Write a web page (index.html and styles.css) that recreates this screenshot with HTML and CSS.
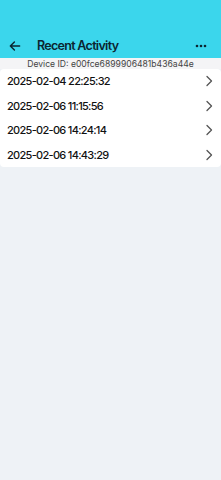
FILE: index.html
```html
<!DOCTYPE html>
<html lang="en">
  <head>
    <meta charset="UTF-8" />
    <meta name="viewport" content="width=device-width, initial-scale=1.0" />
    <title>Recent Activity</title>
    <link rel="stylesheet" href="styles.css">
  </head>
  <body>
    <header class="topbar">
      <button class="back">
        <svg width="14" height="14" viewBox="0 0 24 24" fill="none" stroke="#0b2530" stroke-width="2.4" stroke-linecap="round" stroke-linejoin="round"><path d="M20 12H4M11 5l-7 7 7 7"/></svg>
      </button>
      <h1>Recent Activity</h1>
      <button class="more">
        <svg width="12" height="4" viewBox="0 0 12 4" fill="#0b2530"><circle cx="2" cy="2" r="1.3"/><circle cx="6" cy="2" r="1.3"/><circle cx="10" cy="2" r="1.3"/></svg>
      </button>
    </header>
    <div class="device">Device ID: e00fce6899906481b436a44e</div>
    <ul class="list">
      <li><span>2025-02-04 22:25:32</span><svg class="chev" width="8" height="12" viewBox="0 0 8 12" fill="none" stroke="#555" stroke-width="1.3" stroke-linecap="round" stroke-linejoin="round"><path d="M2 1.5L6.5 6 2 10.5"/></svg></li>
      <li><span>2025-02-06 11:15:56</span><svg class="chev" width="8" height="12" viewBox="0 0 8 12" fill="none" stroke="#555" stroke-width="1.3" stroke-linecap="round" stroke-linejoin="round"><path d="M2 1.5L6.5 6 2 10.5"/></svg></li>
      <li><span>2025-02-06 14:24:14</span><svg class="chev" width="8" height="12" viewBox="0 0 8 12" fill="none" stroke="#555" stroke-width="1.3" stroke-linecap="round" stroke-linejoin="round"><path d="M2 1.5L6.5 6 2 10.5"/></svg></li>
      <li><span>2025-02-06 14:43:29</span><svg class="chev" width="8" height="12" viewBox="0 0 8 12" fill="none" stroke="#555" stroke-width="1.3" stroke-linecap="round" stroke-linejoin="round"><path d="M2 1.5L6.5 6 2 10.5"/></svg></li>
    </ul>
  </body>
</html>
```

FILE: styles.css
```css
body {
  margin: 0;
  background: #eef2f6;
  font-family: Inter, "Noto Sans", sans-serif;
  color: #111;
}

.topbar {
  background: #3bd6ec;
  height: 58px;
  display: flex;
  align-items: flex-end;
  padding: 0 8px 4px 8px;
  box-sizing: border-box;
}

.topbar button {
  background: none;
  border: none;
  padding: 0;
  display: flex;
  align-items: center;
  height: 16px;
}

.topbar h1 {
  flex: 1;
  margin: 0 0 0 15px;
  font-size: 12.5px;
  font-weight: 600;
  color: #0b2530;
  line-height: 16px;
  letter-spacing: -0.7px;
}

.topbar .more {
  margin-right: 6px;
}

.device {
  background: #f4f4f6;
  text-align: center;
  font-size: 8.6px;
  color: #444;
  height: 10px;
  padding-top: 1px;
  line-height: 10px;
}

.list {
  list-style: none;
  margin: 0;
  padding: 0;
  background: #fff;
  border-radius: 4px;
}

.list li {
  height: 24.5px;
  display: flex;
  align-items: center;
  justify-content: space-between;
  padding: 0 8px 0 7px;
  font-size: 11px;
  font-weight: 500;
  letter-spacing: -0.7px;
}
```
